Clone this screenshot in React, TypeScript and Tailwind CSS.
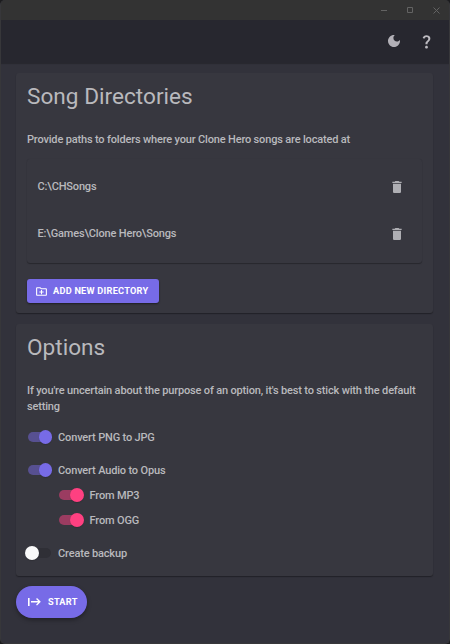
import React from 'react';

function Trash() {
  return (
    <svg className="size-4 fill-[#aeaeb3]" viewBox="0 0 24 24">
      <path d="M6 19c0 1.1.9 2 2 2h8c1.1 0 2-.9 2-2V7H6v12zM19 4h-3.5l-1-1h-5l-1 1H5v2h14V4z" />
    </svg>
  );
}

function Directory({ path }: { path: string }) {
  return (
    <div className="flex h-[47px] items-center justify-between pr-[17px] pl-[10.5px]">
      <span className="pt-px">{path}</span>
      <Trash />
    </div>
  );
}

function Toggle({ label, tone }: { label: string; tone: 'purple' | 'pink' | 'off' }) {
  const track = tone === 'purple' ? 'bg-[#575091]' : tone === 'pink' ? 'bg-[#9b3c61]' : 'bg-[#2f2f36]';
  const thumb = tone === 'purple' ? 'bg-[#776be7]' : tone === 'pink' ? 'bg-[#ff4081]' : 'bg-[#fafafa]';
  return (
    <label className="flex h-4 items-center">
      <span className={'ml-[0.6px] flex h-[10px] w-[23px] items-center rounded-full ' + track}>
        <span
          className={
            'size-[13.4px] shrink-0 rounded-full shadow-[0_1px_1px_rgba(0,0,0,0.15)] ' +
            thumb +
            (tone === 'off' ? ' -ml-[2.4px]' : ' ml-[11.4px]')
          }
        />
      </span>
      <span className="ml-[7.5px] pt-px">{label}</span>
    </label>
  );
}

const card =
  'mr-[15.6px] ml-[15.3px] rounded-[3px] bg-[#37373f] pr-[11px] pl-[10.7px] shadow-[0_1px_1px_rgba(0,0,0,0.25),0_1px_1px_rgba(0,0,0,0.1)]';

export default function App() {
  return (
    <div className="h-[644px] w-[450px] bg-[#1c1c1e] font-['Roboto','Liberation_Sans',sans-serif] text-[11px] leading-4 font-medium tracking-[-0.165px] text-[#b9b9bd]">
      <div className="flex h-full flex-col overflow-hidden rounded-[5px] border border-t-0 border-[#37373a] bg-[#32323b]">
        <div className="flex h-5 shrink-0 items-center justify-end bg-[#333333] pr-[9px]">
          <svg className="h-2 w-[60px] fill-none stroke-[#636363]" viewBox="0 0 60 8">
            <path d="M1 4.5h6M27.5 1.5h5v5h-5zM53.5 1.5l6 6m0-6l-6 6" />
          </svg>
        </div>
        <header className="flex h-[42.5px] shrink-0 items-center justify-end bg-[#27272f] pr-[14.5px] shadow-[0_1px_1px_rgba(0,0,0,0.2)]">
          <svg className="size-4 fill-[#b2b0b7]" viewBox="0 0 24 24">
            <path d="M12 3c-4.97 0-9 4.03-9 9s4.03 9 9 9 9-4.03 9-9c0-.46-.04-.92-.1-1.36-.98 1.37-2.58 2.26-4.4 2.26-2.98 0-5.4-2.42-5.4-5.4 0-1.81.89-3.42 2.26-4.4-.44-.06-.9-.1-1.36-.1z" />
          </svg>
          <svg className="ml-[15.5px] size-[17px] fill-[#bdbbc1]" viewBox="0 0 24 24">
            <path d="M11.07 12.85c.77-1.39 2.25-2.21 3.11-3.44.91-1.29.4-3.7-2.18-3.7-1.69 0-2.52 1.28-2.87 2.34L6.54 6.96C7.25 4.83 9.18 3 11.99 3c2.35 0 3.96 1.07 4.78 2.41.7 1.15 1.11 3.3.03 4.9-1.2 1.77-2.35 2.31-2.97 3.45-.25.46-.35.76-.35 2.24h-2.89c-.01-.78-.13-2.05.48-3.15zM14 20c0 1.1-.9 2-2 2s-2-.9-2-2 .9-2 2-2 2 .9 2 2z" />
          </svg>
        </header>
        <section className={card + ' mt-[10.5px] h-[240px] shrink-0'}>
          <h1 className="pt-[10px] text-[22.6px] leading-7 font-normal tracking-[0.02px]">Song Directories</h1>
          <p className="mt-[21px]">Provide paths to folders where your Clone Hero songs are located at</p>
          <div className="mt-[11px] h-[104px] rounded-[3px] pt-1 shadow-[0_1px_1px_rgba(0,0,0,0.28),0_0_1px_rgba(0,0,0,0.15)]">
            <Directory path="C:\CHSongs" />
            <Directory path="E:\Games\Clone Hero\Songs" />
          </div>
          <button className="mt-4 flex h-6 w-[132px] items-center rounded-[3px] bg-[#776be7] pl-2 text-[9.2px] font-bold tracking-[0.25px] text-white shadow-[0_1px_2px_rgba(0,0,0,0.45)]">
            <svg className="mr-[5px] size-[13px] fill-white" viewBox="0 0 24 24">
              <path d="M20 6h-8l-2-2H4c-1.11 0-1.99.89-1.99 2L2 18c0 1.11.89 2 2 2h16c1.11 0 2-.89 2-2V8c0-1.11-.89-2-2-2zm0 12H4V6h5.17l2 2H20v10zM11 9h2v3h3v2h-3v3h-2v-3H8v-2h3z" />
            </svg>
            ADD NEW DIRECTORY
          </button>
        </section>
        <section className={card + ' mt-[11px] h-[252px] shrink-0'}>
          <h1 className="pt-[10px] text-[22.6px] leading-7 font-normal tracking-[0.02px]">Options</h1>
          <p className="mt-[21px]">
            If you're uncertain about the purpose of an option, it's best to stick with the default setting
          </p>
          <div className="mt-[14px]">
            <Toggle label="Convert PNG to JPG" tone="purple" />
          </div>
          <div className="mt-[17px]">
            <Toggle label="Convert Audio to Opus" tone="purple" />
          </div>
          <div className="mt-[9px] ml-[31.5px] flex flex-col gap-[9px]">
            <Toggle label="From MP3" tone="pink" />
            <Toggle label="From OGG" tone="pink" />
          </div>
          <div className="mt-[17px]">
            <Toggle label="Create backup" tone="off" />
          </div>
        </section>
        <button className="mt-[10px] ml-[15.3px] flex h-8 w-[71px] shrink-0 items-center rounded-full bg-[#776be7] pl-[10.7px] text-[9.2px] font-bold tracking-[0.25px] text-white shadow-[0_2px_4px_rgba(0,0,0,0.35)]">
          <svg className="mr-[5px] size-4 fill-white" viewBox="0 0 24 24">
            <path d="M15 6l-1.41 1.41L16.67 10.5H6v2.4h10.67l-3.08 3.09L15 17.4l5.7-5.7zM1.5 6h2.4v12H1.5z" />
          </svg>
          START
        </button>
      </div>
    </div>
  );
}
